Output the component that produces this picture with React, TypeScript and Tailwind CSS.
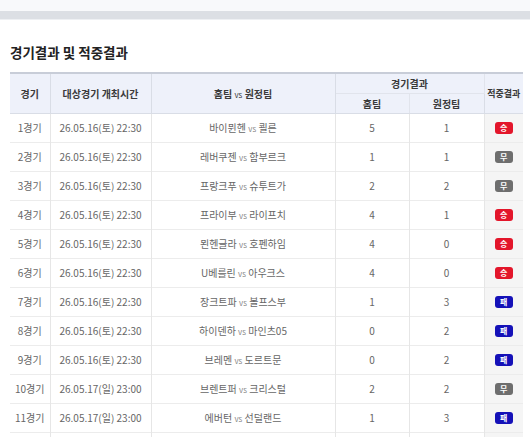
import React from "react";

type Row = { no: string; date: string; home: string; away: string; hs: number; as: number; r: "승" | "무" | "패" };

const rows: Row[] = [
  { no: "1경기", date: "26.05.16(토) 22:30", home: "바이뮌헨", away: "쾰른", hs: 5, as: 1, r: "승" },
  { no: "2경기", date: "26.05.16(토) 22:30", home: "레버쿠젠", away: "함부르크", hs: 1, as: 1, r: "무" },
  { no: "3경기", date: "26.05.16(토) 22:30", home: "프랑크푸", away: "슈투트가", hs: 2, as: 2, r: "무" },
  { no: "4경기", date: "26.05.16(토) 22:30", home: "프라이부", away: "라이프치", hs: 4, as: 1, r: "승" },
  { no: "5경기", date: "26.05.16(토) 22:30", home: "묀헨글라", away: "호펜하임", hs: 4, as: 0, r: "승" },
  { no: "6경기", date: "26.05.16(토) 22:30", home: "U베를린", away: "아우크스", hs: 4, as: 0, r: "승" },
  { no: "7경기", date: "26.05.16(토) 22:30", home: "장크트파", away: "볼프스부", hs: 1, as: 3, r: "패" },
  { no: "8경기", date: "26.05.16(토) 22:30", home: "하이덴하", away: "마인츠05", hs: 0, as: 2, r: "패" },
  { no: "9경기", date: "26.05.16(토) 22:30", home: "브레멘", away: "도르트문", hs: 0, as: 2, r: "패" },
  { no: "10경기", date: "26.05.17(일) 23:00", home: "브렌트퍼", away: "크리스털", hs: 2, as: 2, r: "무" },
  { no: "11경기", date: "26.05.17(일) 23:00", home: "에버턴", away: "선덜랜드", hs: 1, as: 3, r: "패" },
];

function Badge({ r }: { r: Row["r"] }) {
  const cls =
    r === "승"
      ? "bg-[#e3162b]"
      : r === "무"
      ? "bg-[#6e6e6e]"
      : "bg-[#1511b8]";
  return (
    <span className={`inline-flex h-[12px] w-[18px] items-center justify-center rounded-[3px] text-[8px] font-bold leading-none text-white ${cls}`}>
      {r}
    </span>
  );
}

export default function App() {
  return (
    <div className="min-h-screen bg-white" style={{ fontFamily: '"Noto Sans CJK KR", "Noto Sans", sans-serif' }}>
      <div className="h-[11px] bg-[#f8f9fb]" />
      <div className="h-[8px] bg-[#dcdfe4]" />
      <div className="h-px bg-[#eef0f3]" />
      <div className="px-[10px] pt-[22px]">
        <h2 className="text-[13.5px] font-bold leading-[20px] text-[#222]">경기결과 및 적중결과</h2>
        <table className="mt-[10px] w-[513px] table-fixed border-t-2 border-[#c8cdd8] text-center text-[10px] text-[#666]">
          <colgroup>
            <col className="w-[40px]" />
            <col className="w-[101px]" />
            <col className="w-[184px]" />
            <col className="w-[74px]" />
            <col className="w-[75px]" />
            <col className="w-[39px]" />
          </colgroup>
          <thead className="bg-[#eef1fa] text-[10px] font-bold text-[#3a3a3a]">
            <tr className="h-[20px]">
              <th rowSpan={2} className="border-b border-r border-[#d9dde6] font-bold">경기</th>
              <th rowSpan={2} className="border-b border-r border-[#d9dde6] font-bold">대상경기 개최시간</th>
              <th rowSpan={2} className="border-b border-r border-[#d9dde6] font-bold">
                홈팀 <span className="text-[8px] font-normal">vs</span> 원정팀
              </th>
              <th colSpan={2} className="border-b border-r border-[#e1e4ec] font-bold">경기결과</th>
              <th rowSpan={2} className="whitespace-nowrap border-b border-[#d9dde6] text-[9px] font-bold">적중결과</th>
            </tr>
            <tr className="h-[20px]">
              <th className="border-b border-r border-[#d9dde6] border-r-[#e1e4ec] font-bold">홈팀</th>
              <th className="border-b border-r border-[#d9dde6] font-bold">원정팀</th>
            </tr>
          </thead>
          <tbody>
            {rows.map((row) => (
              <tr key={row.no} className="h-[29px] border-b border-[#ececec]">
                <td className="border-r border-[#e6e6e6]">{row.no}</td>
                <td className="border-r border-[#e6e6e6]">{row.date}</td>
                <td className="border-r border-[#e6e6e6]">
                  {row.home} <span className="text-[8px] text-[#888]">vs</span> {row.away}
                </td>
                <td className="border-r border-[#e6e6e6]">{row.hs}</td>
                <td className="border-r border-[#e6e6e6]">{row.as}</td>
                <td className="bg-[#f5f5f5]">
                  <div className="flex items-center justify-center">
                    <Badge r={row.r} />
                  </div>
                </td>
              </tr>
            ))}
            <tr className="h-[29px] border-b border-[#ececec]">
              <td className="border-r border-[#e6e6e6]" />
              <td className="border-r border-[#e6e6e6]" />
              <td className="border-r border-[#e6e6e6]" />
              <td className="border-r border-[#e6e6e6]" />
              <td className="border-r border-[#e6e6e6]" />
              <td className="bg-[#f5f5f5]" />
            </tr>
          </tbody>
        </table>
      </div>
    </div>
  );
}
